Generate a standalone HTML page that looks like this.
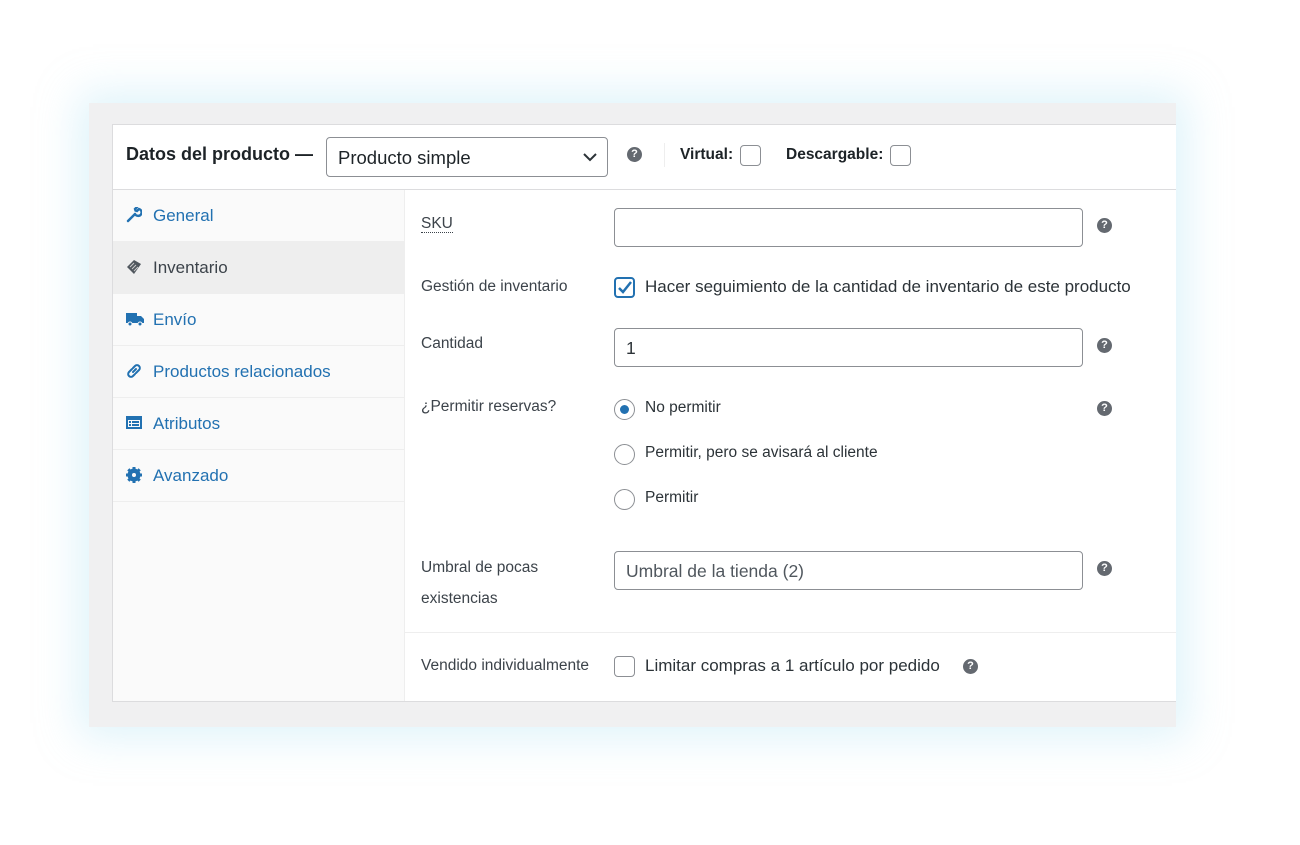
<!DOCTYPE html>
<html><head><meta charset="utf-8"><style>
*{box-sizing:border-box;margin:0;padding:0}
body{width:1300px;height:845px;background:#fff;font-family:"Liberation Sans",sans-serif;position:relative;overflow:hidden;color:#3c434a}
.abs{position:absolute}
#outer{left:89px;top:103px;width:1087px;height:624px;background:#f0f0f1;box-shadow:0 0 40px 10px rgba(160,220,240,0.35)}
#box{left:112px;top:124px;width:1064px;height:578px;background:#fff;border:1px solid #dcdcde;border-right:none}
#hdr{left:112px;top:124px;width:1064px;height:66px;border-bottom:1px solid #dcdcde}
#side{left:113px;top:190px;width:292px;height:511px;background:#fafafa;border-right:1px solid #eee}
.item{position:absolute;left:0;width:292px;height:52px;border-bottom:1px solid #eee;color:#2271b1;font-size:17px;padding:16px 0 0 40px}
.item svg{position:absolute;left:13px;top:17px}
.lbl{position:absolute;left:421px;font-size:15.5px;color:#3c434a}
.inp{position:absolute;left:614px;width:469px;height:39px;border:1px solid #8c8f94;border-radius:4px;font-size:17.5px;padding:9px 11px;color:#2c3338}
.help{position:absolute;width:15px;height:15px;border-radius:50%;background:#646970;color:#fff;font-size:11px;font-weight:bold;text-align:center;line-height:15px}
.radio{position:absolute;left:614px;width:21px;height:21px;border-radius:50%;border:1px solid #8c8f94;background:#fff}
.rt{position:absolute;left:645px;font-size:15.5px;color:#2c3338}
.cb{position:absolute;width:21px;height:21px;border:1px solid #8c8f94;border-radius:4px;background:#fff}
</style></head><body>
<div id="outer" class="abs"></div>
<div id="box" class="abs"></div>
<div id="hdr" class="abs"></div>
<div class="abs" style="left:126px;top:144px;font-size:18px;font-weight:bold;color:#1d2327">Datos del producto —</div>
<div class="abs" style="left:326px;top:137px;width:282px;height:40px;border:1px solid #8c8f94;border-radius:4px;font-size:18.5px;color:#1d2327;padding:9px 11px">Producto simple
<svg style="position:absolute;right:10px;top:15px" width="14" height="9" viewBox="0 0 14 9"><path d="M1 1l6 6 6-6" stroke="#2c3338" stroke-width="2" fill="none"/></svg></div>
<div class="help" style="left:627px;top:147px">?</div>
<div class="abs" style="left:664px;top:143px;width:1px;height:24px;background:#eee"></div>
<div class="abs" style="left:680px;top:146px;font-size:15.5px;font-weight:bold;color:#1d2327">Virtual:</div>
<div class="cb" style="left:740px;top:145px"></div>
<div class="abs" style="left:786px;top:146px;font-size:15.5px;font-weight:bold;color:#1d2327">Descargable:</div>
<div class="cb" style="left:890px;top:145px"></div>

<div id="side" class="abs">
<div class="item" style="top:0">General<svg width="16" height="16" viewBox="0 0 16 16"><path d="M2 14l7-7M9 7a3.5 3.5 0 1 0 4-5l-2 2-1.5-.5L9 2l2-2" stroke="#2271b1" stroke-width="2.4" fill="none" stroke-linecap="round"/></svg></div>
<div class="item" style="top:52px;background:#eee;color:#3c434a">Inventario<svg width="16" height="16" viewBox="0 0 16 16"><path d="M1 8l7-7 7 4-7 10z" fill="#50575e"/><path d="M4 8l4-4M6 10l4-4M8 12l4-4" stroke="#ccc" stroke-width="1"/></svg></div>
<div class="item" style="top:104px">Envío<svg width="18" height="16" viewBox="0 0 18 16"><rect x="0" y="2" width="11" height="10" fill="#2271b1"/><path d="M11 5h4l3 3v4h-7z" fill="#2271b1"/><circle cx="4" cy="13" r="2" fill="#2271b1" stroke="#fafafa"/><circle cx="14" cy="13" r="2" fill="#2271b1" stroke="#fafafa"/></svg></div>
<div class="item" style="top:156px">Productos relacionados<svg width="16" height="16" viewBox="0 0 16 16"><path d="M7 9l3-3M6 6l-3 3a2.5 2.5 0 0 0 4 4l2-2M10 10l3-3a2.5 2.5 0 0 0-4-4L7 5" stroke="#2271b1" stroke-width="2" fill="none" stroke-linecap="round"/></svg></div>
<div class="item" style="top:208px">Atributos<svg width="16" height="16" viewBox="0 0 16 16"><rect x="0" y="1" width="16" height="13" fill="#2271b1"/><rect x="2" y="5" width="12" height="7" fill="#fafafa"/><rect x="3" y="6" width="2" height="2" fill="#2271b1"/><rect x="6" y="6" width="7" height="2" fill="#2271b1"/><rect x="3" y="9" width="2" height="2" fill="#2271b1"/><rect x="6" y="9" width="7" height="2" fill="#2271b1"/></svg></div>
<div class="item" style="top:260px">Avanzado<svg width="16" height="16" viewBox="0 0 16 16"><circle cx="8" cy="8" r="5" fill="none" stroke="#2271b1" stroke-width="3"/><path d="M8 0v16M0 8h16M2.3 2.3l11.4 11.4M13.7 2.3L2.3 13.7" stroke="#2271b1" stroke-width="3"/><circle cx="8" cy="8" r="2" fill="#fafafa"/></svg></div>
</div>

<div class="lbl" style="top:216px;border-bottom:1px dotted #3c434a;line-height:16px">SKU</div>
<div class="inp" style="top:208px"></div>
<div class="help" style="left:1097px;top:218px">?</div>

<div class="lbl" style="top:278px">Gestión de inventario</div>
<div class="cb" style="left:614px;top:277px;border:2px solid #2271b1"><svg width="17" height="17" viewBox="0 0 17 17" style="position:absolute;left:0;top:0"><path d="M3 9l4 4 8-10" stroke="#2271b1" stroke-width="2.5" fill="none"/></svg></div>
<div class="rt" style="top:277px;font-size:17px">Hacer seguimiento de la cantidad de inventario de este producto</div>

<div class="lbl" style="top:335px">Cantidad</div>
<div class="inp" style="top:328px">1</div>
<div class="help" style="left:1097px;top:338px">?</div>

<div class="lbl" style="top:398px">¿Permitir reservas?</div>
<div class="radio" style="top:399px"><div style="position:absolute;left:5px;top:5px;width:9px;height:9px;border-radius:50%;background:#2271b1"></div></div>
<div class="rt" style="top:399px">No permitir</div>
<div class="radio" style="top:444px"></div>
<div class="rt" style="top:444px">Permitir, pero se avisará al cliente</div>
<div class="radio" style="top:489px"></div>
<div class="rt" style="top:489px">Permitir</div>
<div class="help" style="left:1097px;top:401px">?</div>

<div class="lbl" style="top:552px;line-height:31px">Umbral de pocas<br>existencias</div>
<div class="inp" style="top:551px;color:#50575e">Umbral de la tienda (2)</div>
<div class="help" style="left:1097px;top:561px">?</div>

<div class="abs" style="left:405px;top:632px;width:771px;height:1px;background:#eee"></div>
<div class="lbl" style="top:657px">Vendido individualmente</div>
<div class="cb" style="left:614px;top:656px"></div>
<div class="rt" style="top:656px;font-size:17px">Limitar compras a 1 artículo por pedido</div>
<div class="help" style="left:963px;top:659px">?</div>
</body></html>
